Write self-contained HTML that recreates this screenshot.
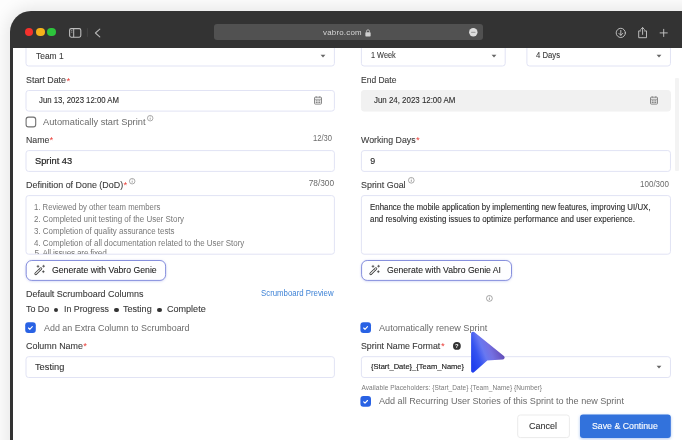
<!DOCTYPE html>
<html><head><meta charset="utf-8"><title>Vabro</title>
<style>
html,body{margin:0;padding:0;}
body{width:682px;height:440px;overflow:hidden;position:relative;background:#fdfdfd;font-family:"Liberation Sans",sans-serif;}
.frame{position:absolute;left:9.8px;top:11.3px;width:700px;height:460px;background:#333;border-top-left-radius:21px;box-shadow:0 0 16px 4px rgba(0,0,0,0.085);}
.page{position:absolute;left:13px;top:47.5px;width:669px;height:393px;background:#fff;}
.clip{position:absolute;left:13px;top:47.5px;width:669px;height:392.5px;overflow:hidden;}
.clip .in{will-change:transform;position:absolute;left:-13px;top:-47.5px;width:682px;height:440px;}
.t{position:absolute;white-space:pre;transform-origin:0 50%;}
.a{position:absolute;display:block;overflow:visible}
.tl{position:absolute;width:8.6px;height:8.6px;border-radius:50%;top:27.7px;}
.url{position:absolute;left:214px;top:24px;width:269px;height:16px;border-radius:3px;background:#515151;}
.ta{position:absolute;left:26.5px;top:196.6px;width:307px;height:57.6px;overflow:hidden;}
</style></head><body>
<div class="frame"></div>
<div class="page"></div>
<div class="clip"><div class="in">
<svg class="a" style="left:0;top:0" width="682" height="440" viewBox="0 0 682 440"><defs><filter id="gs" x="-5%" y="-30%" width="110%" height="160%"><feDropShadow dx="0" dy="0.4" stdDeviation="0.8" flood-color="#6e78dc" flood-opacity="0.35"/></filter><filter id="ss" x="-10%" y="-30%" width="120%" height="170%"><feDropShadow dx="0" dy="1" stdDeviation="1.6" flood-color="#2f6fdb" flood-opacity="0.4"/></filter></defs>
<rect x="26.0" y="40" width="308.40" height="26.00" rx="2.6" fill="#fff" stroke="#e1e3f4" stroke-width="1"/>
<rect x="361.4" y="40" width="143.80" height="26.00" rx="2.6" fill="#fff" stroke="#e1e3f4" stroke-width="1"/>
<rect x="526.9" y="40" width="143.55" height="26.00" rx="2.6" fill="#fff" stroke="#e1e3f4" stroke-width="1"/>
<rect x="26.0" y="90.5" width="308.40" height="20.60" rx="2.6" fill="#fff" stroke="#e1e3f4" stroke-width="1"/>
<rect x="361.4" y="90.5" width="309.05" height="20.60" rx="2.6" fill="#f1f1f1" stroke="#f1f1f1" stroke-width="1"/>
<rect x="26.0" y="150.6" width="308.40" height="20.80" rx="2.6" fill="#fff" stroke="#e1e3f4" stroke-width="1"/>
<rect x="361.4" y="150.6" width="309.05" height="20.80" rx="2.6" fill="#fff" stroke="#e1e3f4" stroke-width="1"/>
<rect x="26.0" y="195.6" width="308.40" height="58.60" rx="2.6" fill="#fff" stroke="#e1e3f4" stroke-width="1"/>
<rect x="361.4" y="195.6" width="309.05" height="58.60" rx="2.6" fill="#fff" stroke="#e1e3f4" stroke-width="1"/>
<rect x="26.0" y="356.7" width="308.40" height="20.80" rx="2.6" fill="#fff" stroke="#e1e3f4" stroke-width="1"/>
<rect x="361.4" y="356.7" width="309.05" height="20.80" rx="2.6" fill="#fff" stroke="#e1e3f4" stroke-width="1"/>
<rect x="26.2" y="260.5" width="139.40" height="19.90" rx="5.6" fill="#fefeff" stroke="#8790dd" stroke-width="1" filter="url(#gs)"/>
<rect x="361.6" y="260.5" width="149.90" height="19.90" rx="5.6" fill="#fefeff" stroke="#8790dd" stroke-width="1" filter="url(#gs)"/>
<rect x="517.7" y="415" width="51.70" height="22.60" rx="2.6" fill="#fff" stroke="#ebebeb" stroke-width="1"/>
<rect x="580" y="414.5" width="90.80" height="23.50" rx="3" fill="#3172dc" stroke="none" stroke-width="0" filter="url(#ss)"/>
<rect x="26.1" y="117.1" width="9.60" height="9.80" rx="2.4" fill="#fff" stroke="#707070" stroke-width="1.1"/>
<g transform="translate(25.4,322.5)"><rect x="-0.2" y="-0.2" width="10.6" height="10.6" rx="3" fill="#2962e4"/><path d="M3.1 5.5 L4.4 6.8 L6.9 4.2" fill="none" stroke="#fff" stroke-width="1.15" stroke-linecap="round" stroke-linejoin="round"/></g>
<g transform="translate(360.6,322.5)"><rect x="-0.2" y="-0.2" width="10.6" height="10.6" rx="3" fill="#2962e4"/><path d="M3.1 5.5 L4.4 6.8 L6.9 4.2" fill="none" stroke="#fff" stroke-width="1.15" stroke-linecap="round" stroke-linejoin="round"/></g>
<g transform="translate(360.6,396.3)"><rect x="-0.2" y="-0.2" width="10.6" height="10.6" rx="3" fill="#2962e4"/><path d="M3.1 5.5 L4.4 6.8 L6.9 4.2" fill="none" stroke="#fff" stroke-width="1.15" stroke-linecap="round" stroke-linejoin="round"/></g></svg>
<div style="position:absolute;left:675px;top:77.5px;width:4.2px;height:93.5px;background:#f3f3f3;border-radius:1px"></div>
<div style="position:absolute;left:53.8px;top:307.8px;width:4.6px;height:4.6px;border-radius:50%;background:#333"></div>
<div style="position:absolute;left:114.1px;top:307.8px;width:4.6px;height:4.6px;border-radius:50%;background:#333"></div>
<div style="position:absolute;left:157.3px;top:307.8px;width:4.6px;height:4.6px;border-radius:50%;background:#333"></div>
<svg class="a" style="left:319.8px;top:53.6px" width="6" height="4" viewBox="0 0 6 4"><path d="M0.6 0.7 H5.4 L3 3.4 Z" fill="#666"/></svg>
<svg class="a" style="left:490.6px;top:53.6px" width="6" height="4" viewBox="0 0 6 4"><path d="M0.6 0.7 H5.4 L3 3.4 Z" fill="#666"/></svg>
<svg class="a" style="left:655.6px;top:53.6px" width="6" height="4" viewBox="0 0 6 4"><path d="M0.6 0.7 H5.4 L3 3.4 Z" fill="#666"/></svg>
<svg class="a" style="left:655.6px;top:364.8px" width="6" height="4" viewBox="0 0 6 4"><path d="M0.6 0.7 H5.4 L3 3.4 Z" fill="#666"/></svg>
<svg class="a" style="left:147.2px;top:115.2px" width="6.4" height="6.4" viewBox="0 0 10 10"><circle cx="5" cy="5" r="4.3" fill="none" stroke="#686868" stroke-width="0.85"/><path d="M5 4.4 V7.3" stroke="#686868" stroke-width="0.9"/><circle cx="5" cy="2.9" r="0.6" fill="#686868"/></svg>
<svg class="a" style="left:128.7px;top:178.4px" width="6.4" height="6.4" viewBox="0 0 10 10"><circle cx="5" cy="5" r="4.3" fill="none" stroke="#686868" stroke-width="0.85"/><path d="M5 4.4 V7.3" stroke="#686868" stroke-width="0.9"/><circle cx="5" cy="2.9" r="0.6" fill="#686868"/></svg>
<svg class="a" style="left:407.7px;top:177.3px" width="6.6" height="6.6" viewBox="0 0 10 10"><circle cx="5" cy="5" r="4.3" fill="none" stroke="#686868" stroke-width="0.85"/><path d="M5 4.4 V7.3" stroke="#686868" stroke-width="0.9"/><circle cx="5" cy="2.9" r="0.6" fill="#686868"/></svg>
<svg class="a" style="left:486.2px;top:295.0px" width="6.8" height="6.8" viewBox="0 0 10 10"><circle cx="5" cy="5" r="4.3" fill="none" stroke="#686868" stroke-width="0.85"/><path d="M5 4.4 V7.3" stroke="#686868" stroke-width="0.9"/><circle cx="5" cy="2.9" r="0.6" fill="#686868"/></svg>
<svg class="a" style="left:314px;top:96.4px" width="8" height="8.6" viewBox="0 0 8 8.6"><rect x="0.5" y="1.2" width="7" height="6.9" rx="0.8" fill="none" stroke="#7c7c7c" stroke-width="0.9"/><path d="M0.5 3.3 H7.5" stroke="#7c7c7c" stroke-width="0.7"/><path d="M2.2 0.3 V1.6 M5.8 0.3 V1.6" stroke="#7c7c7c" stroke-width="0.9"/><path d="M1.7 4.8h1.2M3.4 4.8h1.2M5.1 4.8h1.2M1.7 6.4h1.2M3.4 6.4h1.2M5.1 6.4h1.2" stroke="#7c7c7c" stroke-width="1.1"/></svg>
<svg class="a" style="left:649.6px;top:96.4px" width="8" height="8.6" viewBox="0 0 8 8.6"><rect x="0.5" y="1.2" width="7" height="6.9" rx="0.8" fill="none" stroke="#7c7c7c" stroke-width="0.9"/><path d="M0.5 3.3 H7.5" stroke="#7c7c7c" stroke-width="0.7"/><path d="M2.2 0.3 V1.6 M5.8 0.3 V1.6" stroke="#7c7c7c" stroke-width="0.9"/><path d="M1.7 4.8h1.2M3.4 4.8h1.2M5.1 4.8h1.2M1.7 6.4h1.2M3.4 6.4h1.2M5.1 6.4h1.2" stroke="#7c7c7c" stroke-width="1.1"/></svg>
<svg class="a" style="left:33.6px;top:265.4px" width="11.5" height="10.6" viewBox="0 0 11.5 10.6"><path d="M1.75 8.75 L6.9 3.6" stroke="#3d3d3d" stroke-width="2.7" stroke-linecap="round"/><path d="M1.75 8.75 L6.9 3.6" stroke="#fff" stroke-width="1.05" stroke-linecap="round"/><path d="M4.9 4.2 L6.3 5.6" stroke="#3d3d3d" stroke-width="0.7"/><path d="M4 -0.1 l.42 .98 .98 .42 -.98 .42 -.42 .98 -.42 -.98 -.98 -.42 .98 -.42z M9.6 -0.2 l.42 .98 .98 .42 -.98 .42 -.42 .98 -.42 -.98 -.98 -.42 .98 -.42z M9.3 5.3 l.42 .98 .98 .42 -.98 .42 -.42 .98 -.42 -.98 -.98 -.42 .98 -.42z" fill="#3d3d3d" stroke="#3d3d3d" stroke-width="0.25"/></svg>
<svg class="a" style="left:369.3px;top:265.4px" width="11.5" height="10.6" viewBox="0 0 11.5 10.6"><path d="M1.75 8.75 L6.9 3.6" stroke="#3d3d3d" stroke-width="2.7" stroke-linecap="round"/><path d="M1.75 8.75 L6.9 3.6" stroke="#fff" stroke-width="1.05" stroke-linecap="round"/><path d="M4.9 4.2 L6.3 5.6" stroke="#3d3d3d" stroke-width="0.7"/><path d="M4 -0.1 l.42 .98 .98 .42 -.98 .42 -.42 .98 -.42 -.98 -.98 -.42 .98 -.42z M9.6 -0.2 l.42 .98 .98 .42 -.98 .42 -.42 .98 -.42 -.98 -.98 -.42 .98 -.42z M9.3 5.3 l.42 .98 .98 .42 -.98 .42 -.42 .98 -.42 -.98 -.98 -.42 .98 -.42z" fill="#3d3d3d" stroke="#3d3d3d" stroke-width="0.25"/></svg>
<svg class="a" style="left:452.5px;top:342.2px" width="7.8" height="7.8" viewBox="0 0 10 10"><circle cx="5" cy="5" r="5" fill="#333"/><text x="5" y="7.8" font-size="7.5" font-weight="700" text-anchor="middle" fill="#fff" font-family="Liberation Sans, sans-serif">?</text></svg>
<svg class="a" style="left:462px;top:322px;z-index:5" width="52" height="60" viewBox="0 0 52 60"><defs><linearGradient id="cg" gradientUnits="userSpaceOnUse" x1="9" y1="38" x2="42" y2="25"><stop offset="0" stop-color="#2140ee"/><stop offset="0.22" stop-color="#3553f0"/><stop offset="0.42" stop-color="#6878f1"/><stop offset="0.6" stop-color="#7470e2"/><stop offset="0.8" stop-color="#6a59c6"/><stop offset="1" stop-color="#5b48aa"/></linearGradient></defs><path d="M11 11.6 L40.7 35.5 L24.6 36.6 L11 48.7 Z" fill="url(#cg)" stroke="url(#cg)" stroke-width="3.8" stroke-linejoin="round"/></svg>
<div class="ta"><span class="t" style="left:7.9px;top:51.1px;font-size:8.3px;line-height:11.6px;color:#777;letter-spacing:-0.25px">5. All issues are fixed</span></div>
<span class="t" style="left:36.2px;top:49.89px;font-size:8.8px;line-height:12.32px;color:#3a3a3a;transform:scaleX(0.9599);-webkit-text-stroke:0.1px #3a3a3a;">Team 1</span>
<span class="t" style="left:25.8px;top:73.35px;font-size:9.6px;line-height:13.44px;color:#3a3a3a;transform:scaleX(0.9255);-webkit-text-stroke:0.1px #3a3a3a;">Start Date</span>
<span class="t" style="left:66.6px;top:73.55px;font-size:9.6px;line-height:13.44px;color:#ea3a34;">*</span>
<span class="t" style="left:39.0px;top:94.81px;font-size:8.3px;line-height:11.62px;color:#2a2a2a;transform:scaleX(0.9371);-webkit-text-stroke:0.1px #2a2a2a;">Jun 13, 2023 12:00 AM</span>
<span class="t" style="left:43.3px;top:115.97px;font-size:9.3px;line-height:13.02px;color:#6b6b6b;transform:scaleX(0.9965);">Automatically start Sprint</span>
<span class="t" style="left:25.8px;top:133.45px;font-size:9.6px;line-height:13.44px;color:#3a3a3a;transform:scaleX(0.9138);-webkit-text-stroke:0.1px #3a3a3a;">Name</span>
<span class="t" style="left:49.4px;top:133.05px;font-size:9.6px;line-height:13.44px;color:#ea3a34;">*</span>
<span class="t" style="left:313.2px;top:133.11px;font-size:8.3px;line-height:11.62px;color:#6b6b6b;transform:scaleX(0.9147);">12/30</span>
<span class="t" style="left:35.3px;top:154.26px;font-size:9.4px;line-height:13.16px;color:#262626;transform:scaleX(0.9887);-webkit-text-stroke:0.22px #262626;">Sprint 43</span>
<span class="t" style="left:25.8px;top:178.25px;font-size:9.6px;line-height:13.44px;color:#3a3a3a;transform:scaleX(0.9294);-webkit-text-stroke:0.1px #3a3a3a;">Definition of Done (DoD)</span>
<span class="t" style="left:123.6px;top:177.85px;font-size:9.6px;line-height:13.44px;color:#ea3a34;">*</span>
<span class="t" style="left:308.7px;top:178.31px;font-size:8.3px;line-height:11.62px;color:#6b6b6b;letter-spacing:0.003px;">78/300</span>
<span class="t" style="left:34.0px;top:201.91px;font-size:8.3px;line-height:11.62px;color:#777;transform:scaleX(0.9320);">1. Reviewed by other team members</span>
<span class="t" style="left:34.0px;top:213.91px;font-size:8.3px;line-height:11.62px;color:#777;transform:scaleX(0.9597);">2. Completed unit testing of the User Story</span>
<span class="t" style="left:34.0px;top:225.91px;font-size:8.3px;line-height:11.62px;color:#777;transform:scaleX(0.9553);">3. Completion of quality assurance tests</span>
<span class="t" style="left:34.0px;top:237.71px;font-size:8.3px;line-height:11.62px;color:#777;transform:scaleX(0.9561);">4. Completion of all documentation related to the User Story</span>
<span class="t" style="left:51.5px;top:264.38px;font-size:9px;line-height:12.6px;color:#222;transform:scaleX(0.9659);-webkit-text-stroke:0.08px #222;">Generate with Vabro Genie</span>
<span class="t" style="left:25.8px;top:286.96px;font-size:9.4px;line-height:13.16px;color:#3a3a3a;transform:scaleX(0.9546);-webkit-text-stroke:0.1px #3a3a3a;">Default Scrumboard Columns</span>
<span class="t" style="left:260.9px;top:287.72px;font-size:8.2px;line-height:11.48px;color:#3f83d6;transform:scaleX(0.9552);">Scrumboard Preview</span>
<span class="t" style="left:25.8px;top:303.37px;font-size:9.3px;line-height:13.02px;color:#3a3a3a;transform:scaleX(0.9549);-webkit-text-stroke:0.1px #3a3a3a;">To Do</span>
<span class="t" style="left:63.6px;top:303.37px;font-size:9.3px;line-height:13.02px;color:#3a3a3a;transform:scaleX(0.9463);-webkit-text-stroke:0.1px #3a3a3a;">In Progress</span>
<span class="t" style="left:123.0px;top:303.17px;font-size:9.3px;line-height:13.02px;color:#3a3a3a;transform:scaleX(0.9740);-webkit-text-stroke:0.1px #3a3a3a;">Testing</span>
<span class="t" style="left:166.6px;top:303.17px;font-size:9.3px;line-height:13.02px;color:#3a3a3a;transform:scaleX(0.9723);-webkit-text-stroke:0.1px #3a3a3a;">Complete</span>
<span class="t" style="left:43.9px;top:321.87px;font-size:9.3px;line-height:13.02px;color:#6b6b6b;transform:scaleX(0.9580);">Add an Extra Column to Scrumboard</span>
<span class="t" style="left:25.8px;top:339.15px;font-size:9.6px;line-height:13.44px;color:#3a3a3a;transform:scaleX(0.9290);-webkit-text-stroke:0.1px #3a3a3a;">Column Name</span>
<span class="t" style="left:83.2px;top:338.55px;font-size:9.6px;line-height:13.44px;color:#ea3a34;">*</span>
<span class="t" style="left:35.3px;top:360.87px;font-size:9.3px;line-height:13.02px;color:#333;transform:scaleX(0.9943);-webkit-text-stroke:0.1px #333;">Testing</span>
<span class="t" style="left:371.1px;top:50.31px;font-size:8.3px;line-height:11.62px;color:#3a3a3a;transform:scaleX(0.8825);-webkit-text-stroke:0.1px #3a3a3a;">1 Week</span>
<span class="t" style="left:536.3px;top:50.31px;font-size:8.3px;line-height:11.62px;color:#3a3a3a;transform:scaleX(0.9291);-webkit-text-stroke:0.1px #3a3a3a;">4 Days</span>
<span class="t" style="left:361.1px;top:73.35px;font-size:9.6px;line-height:13.44px;color:#3a3a3a;transform:scaleX(0.8844);-webkit-text-stroke:0.1px #3a3a3a;">End Date</span>
<span class="t" style="left:374.3px;top:94.81px;font-size:8.3px;line-height:11.62px;color:#2a2a2a;transform:scaleX(0.9523);-webkit-text-stroke:0.1px #2a2a2a;">Jun 24, 2023 12:00 AM</span>
<span class="t" style="left:360.8px;top:133.45px;font-size:9.6px;line-height:13.44px;color:#3a3a3a;transform:scaleX(0.9165);-webkit-text-stroke:0.1px #3a3a3a;">Working Days</span>
<span class="t" style="left:416.1px;top:133.05px;font-size:9.6px;line-height:13.44px;color:#ea3a34;">*</span>
<span class="t" style="left:370.3px;top:155.29px;font-size:8.8px;line-height:12.32px;color:#222;-webkit-text-stroke:0.1px #222;">9</span>
<span class="t" style="left:361.2px;top:178.25px;font-size:9.6px;line-height:13.44px;color:#3a3a3a;transform:scaleX(0.9287);-webkit-text-stroke:0.1px #3a3a3a;">Sprint Goal</span>
<span class="t" style="left:640.2px;top:178.61px;font-size:8.3px;line-height:11.62px;color:#6b6b6b;transform:scaleX(0.9666);">100/300</span>
<span class="t" style="left:369.6px;top:202.12px;font-size:8.2px;line-height:11.48px;color:#2a2a2a;transform:scaleX(0.9633);-webkit-text-stroke:0.1px #2a2a2a;">Enhance the mobile application by implementing new features, improving UI/UX,</span>
<span class="t" style="left:369.6px;top:214.02px;font-size:8.2px;line-height:11.48px;color:#2a2a2a;transform:scaleX(0.9701);-webkit-text-stroke:0.1px #2a2a2a;">and resolving existing issues to optimize performance and user experience.</span>
<span class="t" style="left:387.0px;top:264.38px;font-size:9px;line-height:12.6px;color:#222;transform:scaleX(0.9587);-webkit-text-stroke:0.08px #222;">Generate with Vabro Genie AI</span>
<span class="t" style="left:379.0px;top:322.07px;font-size:9.3px;line-height:13.02px;color:#6b6b6b;transform:scaleX(0.9836);">Automatically renew Sprint</span>
<span class="t" style="left:361.3px;top:339.15px;font-size:9.6px;line-height:13.44px;color:#3a3a3a;transform:scaleX(0.9175);-webkit-text-stroke:0.1px #3a3a3a;">Sprint Name Format</span>
<span class="t" style="left:440.9px;top:338.55px;font-size:9.6px;line-height:13.44px;color:#ea3a34;">*</span>
<span class="t" style="left:371.4px;top:361.23px;font-size:7.9px;line-height:11.06px;color:#222;transform:scaleX(0.9559);-webkit-text-stroke:0.15px #222;">{Start_Date}_{Team_Name}</span>
<span class="t" style="left:361.5px;top:382.50px;font-size:6.5px;line-height:9.1px;color:#7a7a7a;letter-spacing:0.064px;">Available Placeholders: {Start_Date} {Team_Name} {Number}</span>
<span class="t" style="left:379.0px;top:395.07px;font-size:9.3px;line-height:13.02px;color:#6b6b6b;transform:scaleX(0.9732);">Add all Recurring User Stories of this Sprint to the new Sprint</span>
<span class="t" style="left:528.5px;top:419.88px;font-size:9px;line-height:12.6px;color:#333;transform:scaleX(0.9994);-webkit-text-stroke:0.1px #333;">Cancel</span>
<span class="t" style="left:591.6px;top:419.88px;font-size:9px;line-height:12.6px;color:#fff;transform:scaleX(0.9742);-webkit-text-stroke:0.12px #fff;">Save &amp; Continue</span>
</div></div>
<!-- toolbar -->
<div class="tl" style="left:24.7px;background:#f5312c"></div>
<div class="tl" style="left:36px;background:#f5b21b"></div>
<div class="tl" style="left:47.3px;background:#2dc43c"></div>
<svg class="a" style="left:68px;top:27px" width="36" height="12" viewBox="0 0 36 12"><rect x="1.6" y="1.6" width="11.2" height="8.6" rx="1.6" fill="none" stroke="#bdbdbd" stroke-width="1.1"/><path d="M5.7 1.6 V10.2" stroke="#bdbdbd" stroke-width="1"/><path d="M3 3.6h1.4M3 5.2h1.4" stroke="#bdbdbd" stroke-width="0.6"/><path d="M19.4 1.2 V9.8" stroke="#4a4a4a" stroke-width="0.8"/><path d="M31.8 2.1 L27.4 6 L31.8 9.9" fill="none" stroke="#b4b4b4" stroke-width="1.1" stroke-linecap="round" stroke-linejoin="round"/></svg>
<div class="url"></div>
<svg class="a" style="left:365.2px;top:28.5px" width="6.2" height="8" viewBox="0 0 7 9"><rect x="0.4" y="3.6" width="6" height="4.8" rx="0.8" fill="#cfcfcf"/><path d="M1.7 3.8 V2.6 a1.7 1.7 0 0 1 3.4 0 V3.8" fill="none" stroke="#cfcfcf" stroke-width="0.9"/></svg>
<svg class="a" style="left:468.8px;top:27.6px" width="8.6" height="8.6" viewBox="0 0 10 10"><circle cx="5" cy="5" r="4.9" fill="#dedede"/><rect x="2.3" y="4.3" width="5.4" height="1.4" rx="0.7" fill="#a6a6a6"/></svg>
<svg class="a" style="left:612px;top:24px" width="60" height="18" viewBox="0 0 60 18"><g fill="none" stroke="#c8c8c8" stroke-width="0.9" stroke-linecap="round" stroke-linejoin="round"><circle cx="8.8" cy="8.9" r="4.6"/><path d="M8.8 6.4 V11.2 M6.9 9.4 L8.8 11.3 L10.7 9.4"/><path d="M28.7 6.9 H26.7 V13.7 H34.5 V6.9 H32.5"/><path d="M30.6 10.4 V3.7 M28.8 5.4 L30.6 3.6 L32.4 5.4"/><path d="M51.7 5.3 V12.5 M48.1 8.9 H55.3"/></g></svg>
<span class="t" style="left:322.9px;top:27.08px;font-size:7.9px;line-height:11.06px;color:#d6d6d6;letter-spacing:0.227px;will-change:transform;">vabro.com</span>
</body></html>
